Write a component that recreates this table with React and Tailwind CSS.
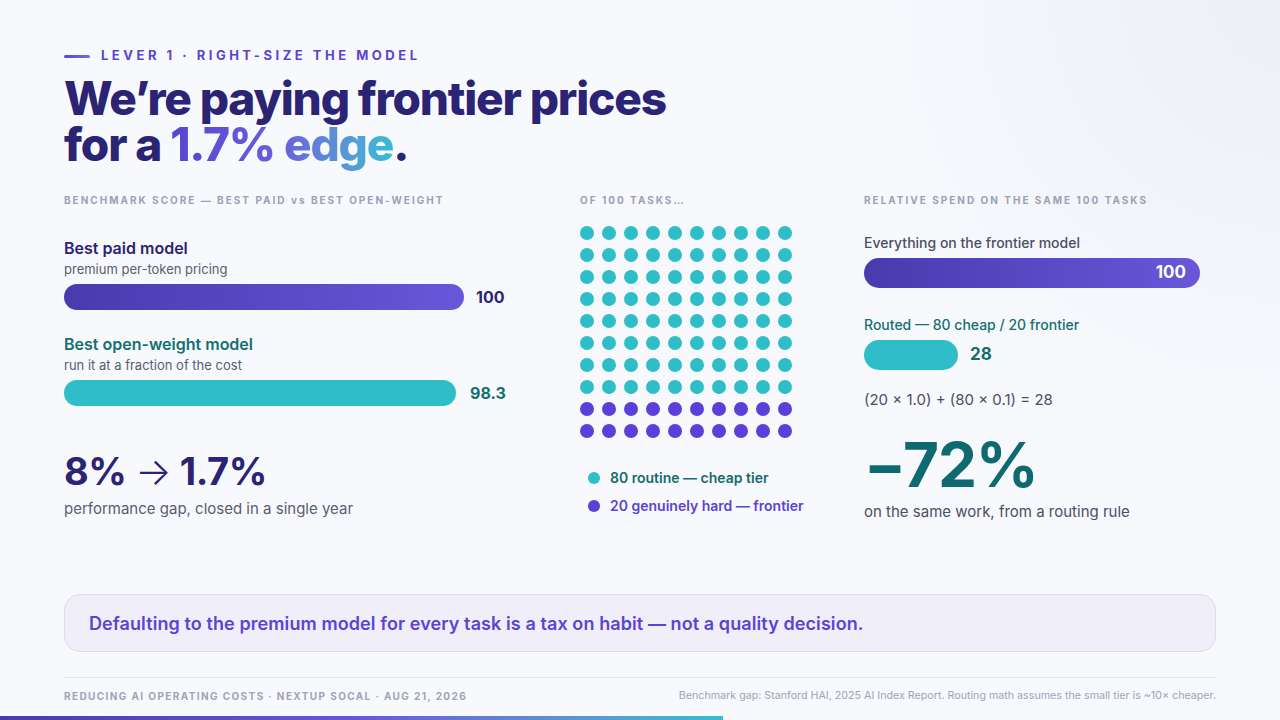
import React from "react";

const dots = Array.from({ length: 100 }, (_, i) => i);

const Label = ({ children }) => (
  <div className="text-[10px] leading-[12px] font-bold tracking-[0.2em] text-[#9ca1b3]">
    {children}
  </div>
);

const App = () => {
  return (
    <div
      className="w-[1280px] h-[720px] overflow-hidden flex flex-col bg-[#f8f9fd] bg-[radial-gradient(circle_at_100%_0%,#eeeff7_0%,#f8f9fd_30%)]"
      style={{ fontFamily: "Inter, 'Noto Sans', sans-serif" }}
    >
      <div className="flex-1 flex flex-col px-16 pt-[48px]">
        {/* eyebrow */}
        <div className="flex items-center gap-[11px] h-4">
          <div className="w-[26px] h-[3px] rounded-full bg-gradient-to-r from-[#5b44d4] to-[#7b6be0]" />
          <div className="text-[13px] font-bold tracking-[0.27em] text-[#5b44d4]">
            LEVER 1 · RIGHT-SIZE THE MODEL
          </div>
        </div>

        <h1 className="mt-[11px] text-[46px] leading-[46px] font-extrabold tracking-[-0.025em] text-[#2b2373]">
          We’re paying frontier prices
          <br />
          for a{" "}
          <span className="bg-gradient-to-r from-[#5a43d3] via-[#6a5fdb] to-[#36bcd0] bg-clip-text text-transparent">
            1.7% edge
          </span>
          .
        </h1>

        {/* columns */}
        <div className="flex mt-[27px]">
          {/* left */}
          <div className="w-[516px] flex flex-col">
            <Label>BENCHMARK SCORE — BEST PAID vs BEST OPEN-WEIGHT</Label>

            <div className="mt-[32px] text-[16px] leading-[20px] font-semibold text-[#2b2373]">
              Best paid model
            </div>
            <div className="mt-[3px] text-[13px] leading-[16px] text-[#585d70]">
              premium per-token pricing
            </div>
            <div className="mt-[7px] flex items-center gap-3">
              <div className="w-[400px] h-[26px] rounded-full bg-gradient-to-r from-[#4a3aae] to-[#6a56da]" />
              <div className="text-[16px] font-bold text-[#2b2373]">100</div>
            </div>

            <div className="mt-[24px] text-[16px] leading-[20px] font-semibold text-[#13706f]">
              Best open-weight model
            </div>
            <div className="mt-[3px] text-[13px] leading-[16px] text-[#585d70]">
              run it at a fraction of the cost
            </div>
            <div className="mt-[7px] flex items-center gap-[14px]">
              <div className="w-[392px] h-[26px] rounded-full bg-[#2fbec8]" />
              <div className="text-[16px] font-bold text-[#13706f]">98.3</div>
            </div>

            <div className="mt-[43px] text-[38px] leading-[44px] font-bold tracking-[-0.01em] text-[#2b2373]">
              8% <span className="font-light">→</span> 1.7%
            </div>
            <div className="mt-[6px] text-[15px] leading-[20px] text-[#585d70]">
              performance gap, closed in a single year
            </div>
          </div>

          {/* middle */}
          <div className="w-[284px] flex flex-col">
            <Label>OF 100 TASKS…</Label>
            <div className="mt-[20px] grid grid-cols-[repeat(10,14px)] gap-[8px]">
              {dots.map((i) => (
                <div
                  key={i}
                  className={
                    i < 80
                      ? "w-[14px] h-[14px] rounded-full bg-[#2fbec8]"
                      : "w-[14px] h-[14px] rounded-full bg-[#5b3fd8]"
                  }
                />
              ))}
            </div>
            <div className="mt-[30px] flex flex-col gap-[8px] pl-[8px]">
              <div className="flex items-center gap-[10px]">
                <div className="w-[12px] h-[12px] rounded-full bg-[#2fbec8]" />
                <div className="text-[14px] leading-[20px] font-semibold text-[#176b6c]">
                  80 routine — cheap tier
                </div>
              </div>
              <div className="flex items-center gap-[10px]">
                <div className="w-[12px] h-[12px] rounded-full bg-[#5b3fd8]" />
                <div className="text-[14px] leading-[20px] font-semibold text-[#5b44d4]">
                  20 genuinely hard — frontier
                </div>
              </div>
            </div>
          </div>

          {/* right */}
          <div className="flex-1 flex flex-col">
            <Label>RELATIVE SPEND ON THE SAME 100 TASKS</Label>

            <div className="mt-[28px] text-[14px] leading-[18px] font-medium text-[#4a4f63]">
              Everything on the frontier model
            </div>
            <div className="mt-[6px] w-[336px] h-[30px] rounded-full bg-gradient-to-r from-[#4a3aae] to-[#6a56da] flex items-center justify-end pr-[14px]">
              <span className="text-[17px] font-bold text-white">100</span>
            </div>

            <div className="mt-[28px] text-[14px] leading-[18px] font-medium text-[#13706f]">
              Routed — 80 cheap / 20 frontier
            </div>
            <div className="mt-[6px] flex items-center gap-[12px]">
              <div className="w-[94px] h-[30px] rounded-full bg-[#2fbec8]" />
              <span className="text-[17px] font-bold text-[#176b6c]">28</span>
            </div>

            <div className="mt-[20px] text-[15px] leading-[20px] text-[#4a4f63]">
              (20 × 1.0) + (80 × 0.1) = 28
            </div>

            <div className="mt-[24px] text-[62px] leading-[62px] font-bold tracking-[-0.02em] text-[#0f6970]">
              −72%
            </div>
            <div className="mt-[6px] text-[15px] leading-[20px] text-[#4a4f63]">
              on the same work, from a routing rule
            </div>
          </div>
        </div>

        {/* callout */}
        <div className="mt-auto h-[58px] rounded-2xl border border-[#dcd9f3] bg-[#efeef9] flex items-center px-6">
          <span className="text-[18px] font-semibold tracking-[0.005em] text-[#5b44d4]">
            Defaulting to the premium model for every task is a tax on habit — not a quality decision.
          </span>
        </div>

        <div className="mt-[25px] h-px bg-[#e3e5ee]" />
        <div className="mt-[11px] mb-[13px] flex items-center justify-between">
          <span className="text-[10px] leading-[14px] font-bold tracking-[0.14em] text-[#a0a4b4]">
            REDUCING AI OPERATING COSTS · NEXTUP SOCAL · AUG 21, 2026
          </span>
          <span className="text-[10.7px] leading-[14px] text-[#a0a4b4]">
            Benchmark gap: Stanford HAI, 2025 AI Index Report. Routing math assumes the small tier is ~10× cheaper.
          </span>
        </div>
      </div>
      <div className="w-[723px] h-[4px] bg-gradient-to-r from-[#4a3aae] via-[#6a56da] to-[#36bcd0]" />
    </div>
  );
};

export default App;
